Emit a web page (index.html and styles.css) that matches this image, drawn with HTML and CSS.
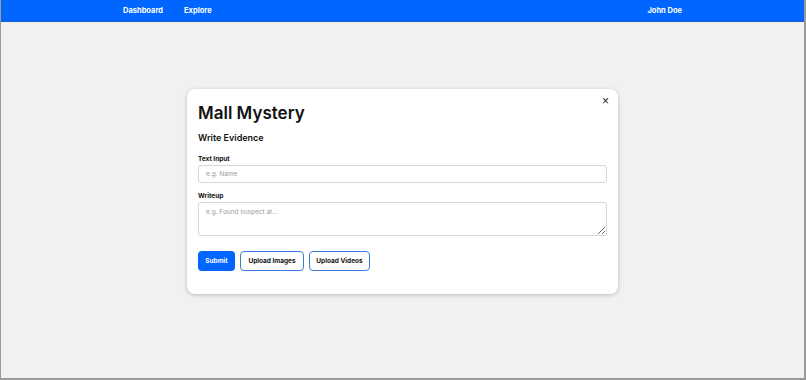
FILE: index.html
```html
<!DOCTYPE html>
<html lang="en">
<head>
  <meta charset="UTF-8" />
  <title>Mall Mystery</title>
  <link rel="stylesheet" href="styles.css">
</head>
<body>
  <div class="frame">
    <nav class="navbar">
      <div class="nav-links">
        <a href="#">Dashboard</a>
        <a href="#">Explore</a>
      </div>
      <a href="#" class="nav-user">John Doe</a>
    </nav>
    <main class="content">
      <div class="modal">
        <button class="close" aria-label="Close">&times;</button>
        <h1>Mall Mystery</h1>
        <h2>Write Evidence</h2>
        <form class="evidence-form">
          <label for="textInput">Text Input</label>
          <input type="text" id="textInput" placeholder="e.g. Name" />
          <label for="writeup">Writeup</label>
          <textarea id="writeup" placeholder="e.g. Found suspect at..."></textarea>
          <div class="actions">
            <button type="submit" class="btn btn-primary">Submit</button>
            <button type="button" class="btn btn-outline">Upload Images</button>
            <button type="button" class="btn btn-outline">Upload Videos</button>
          </div>
        </form>
      </div>
    </main>
  </div>
</body>
</html>
```

FILE: styles.css
```css
:root {
  --blue: #0066ff;
  --bg: #f1f1f1;
  --text: #111;
}
* { box-sizing: border-box; }
body {
  margin: 0;
  font-family: 'Inter', 'Liberation Sans', sans-serif;
  color: var(--text);
  background: var(--bg);
}
.frame {
  height: 380px;
  display: flex;
  flex-direction: column;
  border: 1px solid #9a9a9a;
  border-top: none;
  border-right-width: 2px;
  border-bottom-width: 2px;
}
/* top bar */
.navbar {
  height: 22px;
  background: var(--blue);
  display: flex;
  align-items: center;
  justify-content: space-between;
  padding: 0 122px 0 122px;
  border-bottom: 1px solid #1a5fd0;
}
.navbar a {
  color: #fff;
  text-decoration: none;
  font-size: 7.5px;
  font-weight: 700;
}
.nav-links { display: flex; gap: 21px; }
/* centre card */
.content {
  flex: 1;
  display: flex;
  justify-content: center;
  padding-top: 67px;
}
.modal {
  position: relative;
  width: 431px;
  height: 205px;
  background: #fff;
  border-radius: 8px;
  box-shadow: 0 1px 4px rgba(0,0,0,0.22);
  padding: 10px 10px 0 11px;
}
.close {
  position: absolute;
  top: 6px; right: 9px;
  border: none;
  background: none;
  font-size: 12px;
  line-height: 1;
  padding: 0;
  color: #222;
  cursor: pointer;
}
h1 {
  margin: 0;
  font-size: 17px;
  font-weight: 600;
  line-height: 28px;
}
h2 {
  margin: 5px 0 11px;
  font-size: 9px;
  font-weight: 600;
  line-height: 12px;
}
.evidence-form {
  display: flex;
  flex-direction: column;
}
label {
  font-size: 6.5px;
  font-weight: 700;
  line-height: 9px;
  margin-bottom: 1px;
}
input, textarea {
  width: 409px;
  border: 1px solid #d6d6d6;
  border-radius: 3px;
  font-family: inherit;
  font-size: 6.5px;
  padding: 0 7px;
  color: #333;
}
input { height: 18px; margin-bottom: 9px; }
textarea { height: 34px; padding-top: 5px; resize: vertical; }
input::placeholder, textarea::placeholder { color: #9a9a9a; }
.actions {
  display: flex;
  gap: 5px;
  margin-top: 15px;
}
.btn {
  height: 20px;
  padding: 0 4px;
  border-radius: 4px;
  font-family: inherit;
  font-size: 6.5px;
  font-weight: 700;
  white-space: nowrap;
  cursor: pointer;
}
.btn-primary {
  background: var(--blue);
  color: #fff;
  border: none;
  width: 37px;
}
.btn-outline {
  background: #fff;
  color: #111;
  border: 1.5px solid #3a7be0;
  width: 64px;
}
.btn-outline + .btn-outline { width: 61px; }
```
